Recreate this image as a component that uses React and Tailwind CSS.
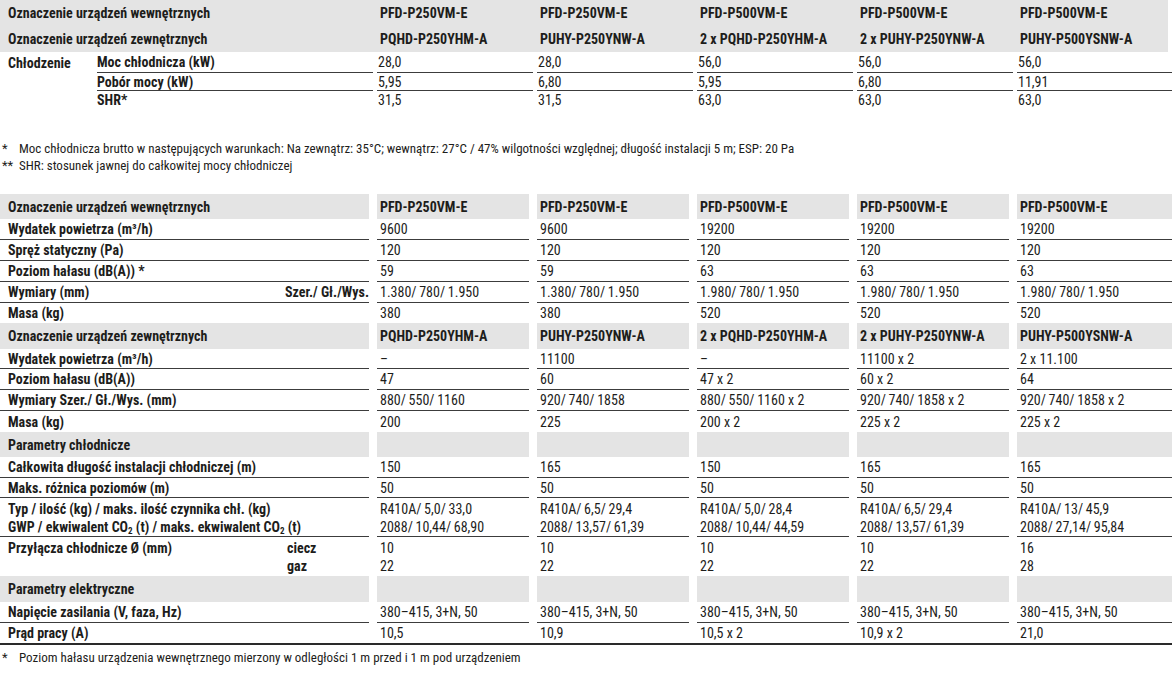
import { Fragment } from 'react';
import clsx from 'clsx';

const GRID = 'grid grid-cols-[369px_152px_152px_152px_152px_155px] gap-x-[8px]';
const LINE = 'border-b border-[#3c3c3c]';

const fix = (v) => (typeof v === 'string' ? v.replace(/\//g, '/\u2009') : v);

const topIndoor = ['PFD-P250VM-E', 'PFD-P250VM-E', 'PFD-P500VM-E', 'PFD-P500VM-E', 'PFD-P500VM-E'];
const topOutdoor = ['PQHD-P250YHM-A', 'PUHY-P250YNW-A', '2 x PQHD-P250YHM-A', '2 x PUHY-P250YNW-A', 'PUHY-P500YSNW-A'];
const topRows = [
  ['Moc chłodnicza (kW)', ['28,0', '28,0', '56,0', '56,0', '56,0']],
  ['Pobór mocy (kW)', ['5,95', '6,80', '5,95', '6,80', '11,91']],
  ['SHR*', ['31,5', '31,5', '63,0', '63,0', '63,0']],
];

const empty = ['', '', '', '', ''];
const co2 = (
  <>
    CO<sub className="text-[9px]">2</sub>
  </>
);

function TopHead({ label, values }) {
  return (
    <div className="grid grid-cols-[377px_160px_160px_160px_160px_1fr] h-[26px] items-center font-bold">
      <div className="pl-2">{label}</div>
      {values.map((v, i) => (
        <div key={i} className="pl-[3px]">{v}</div>
      ))}
    </div>
  );
}

function Row({ label, values, h, line = true, gray = false, multi = false }) {
  const cell = clsx(
    'flex',
    multi ? 'flex-col pt-[2px] leading-[18px]' : 'items-center',
    h,
    line && LINE,
    gray && 'bg-[#e4e4e4] font-bold'
  );
  return (
    <div className={GRID}>
      <div className={clsx(cell, 'pl-2 font-bold')}>{label}</div>
      {values.map((v, i) => (
        <div key={i} className={clsx(cell, 'pl-[3px]')}>
          {multi ? v.map((x, j) => <div key={j}>{fix(x)}</div>) : fix(v)}
        </div>
      ))}
    </div>
  );
}

function Note({ mark, children }) {
  return (
    <div className="flex leading-[17px]">
      <span className="w-[19px] pl-[2px]">{mark}</span>
      <span>{children}</span>
    </div>
  );
}

export default function App() {
  return (
    <div className="w-[1172px] bg-white text-[14px] leading-[18px] text-[#1d1d1b] font-['Roboto_Condensed','Roboto',sans-serif] font-stretch-condensed">
      {/* Chłodzenie */}
      <div className="w-[1168px] bg-[#e4e4e4]">
        <TopHead label="Oznaczenie urządzeń wewnętrznych" values={topIndoor} />
        <TopHead label="Oznaczenie urządzeń zewnętrznych" values={topOutdoor} />
      </div>
      <div className="flex">
        <div className="w-[97px] h-[21px] pl-2 flex items-center font-bold">Chłodzenie</div>
        <div className="grid grid-cols-[276px_156px_156px_156px_156px_155px] gap-x-[4px]">
          {topRows.map(([label, vals], ri) => {
            const cell = clsx(
              'flex items-center',
              ri === 0 ? 'h-[21px]' : 'h-[18px]',
              ri < topRows.length - 1 && LINE
            );
            return (
              <Fragment key={label}>
                <div className={clsx(cell, 'font-bold')}>{label}</div>
                {vals.map((v, i) => (
                  <div key={i} className={clsx(cell, 'pl-[1px]')}>{v}</div>
                ))}
              </Fragment>
            );
          })}
        </div>
      </div>

      <div className="mt-[31px] text-[13px]">
        <Note mark="*">
          Moc chłodnicza brutto w następujących warunkach: Na zewnątrz: 35°C; wewnątrz: 27°C / 47% wilgotności względnej; długość instalacji 5 m; ESP: 20 Pa
        </Note>
        <Note mark="**">SHR: stosunek jawnej do całkowitej mocy chłodniczej</Note>
      </div>

      {/* Dane techniczne */}
      <div className="mt-[20px]">
        <Row gray line={false} h="h-[25px]" label="Oznaczenie urządzeń wewnętrznych" values={topIndoor} />
        <Row h="h-[21px]" label="Wydatek powietrza (m³/h)" values={['9600', '9600', '19200', '19200', '19200']} />
        <Row h="h-[21px]" label="Spręż statyczny (Pa)" values={['120', '120', '120', '120', '120']} />
        <Row h="h-[21px]" label="Poziom hałasu (dB(A)) *" values={['59', '59', '63', '63', '63']} />
        <Row
          h="h-[21px]"
          label={
            <span className="flex w-full justify-between">
              <span>Wymiary (mm)</span>
              <span>Szer./ Gł./Wys.</span>
            </span>
          }
          values={['1.380/780/1.950', '1.380/780/1.950', '1.980/780/1.950', '1.980/780/1.950', '1.980/780/1.950']}
        />
        <Row line={false} h="h-[20px]" label="Masa (kg)" values={['380', '380', '520', '520', '520']} />

        <Row gray line={false} h="h-[26px]" label="Oznaczenie urządzeń zewnętrznych" values={topOutdoor} />
        <Row h="h-[20px]" label="Wydatek powietrza (m³/h)" values={['–', '11100', '–', '11100 x 2', '2 x 11.100']} />
        <Row h="h-[21px]" label="Poziom hałasu (dB(A))" values={['47', '60', '47 x 2', '60 x 2', '64']} />
        <Row
          h="h-[21px]"
          label="Wymiary Szer./ Gł./Wys. (mm)"
          values={['880/550/1160', '920/740/1858', '880/550/1160 x 2', '920/740/1858 x 2', '920/740/1858 x 2']}
        />
        <Row line={false} h="h-[21px]" label="Masa (kg)" values={['200', '225', '200 x 2', '225 x 2', '225 x 2']} />

        <Row gray line={false} h="h-[25px]" label="Parametry chłodnicze" values={empty} />
        <Row h="h-[21px]" label="Całkowita długość instalacji chłodniczej (m)" values={['150', '165', '150', '165', '165']} />
        <Row h="h-[20px]" label="Maks. różnica poziomów (m)" values={['50', '50', '50', '50', '50']} />
        <Row
          multi
          h="h-[39px]"
          label={
            <>
              <div>Typ / ilość (kg) / maks. ilość czynnika chł. (kg)</div>
              <div>GWP / ekwiwalent {co2} (t) / maks. ekwiwalent {co2} (t)</div>
            </>
          }
          values={[
            ['R410A/5,0/33,0', '2088/10,44/68,90'],
            ['R410A/6,5/29,4', '2088/13,57/61,39'],
            ['R410A/5,0/28,4', '2088/10,44/44,59'],
            ['R410A/6,5/29,4', '2088/13,57/61,39'],
            ['R410A/13/45,9', '2088/27,14/95,84'],
          ]}
        />
        <Row
          multi
          line={false}
          h="h-[39px]"
          label={
            <div className="grid grid-cols-[279px_1fr]">
              <div>Przyłącza chłodnicze Ø (mm)</div>
              <div>ciecz</div>
              <div />
              <div>gaz</div>
            </div>
          }
          values={[
            ['10', '22'],
            ['10', '22'],
            ['10', '22'],
            ['10', '22'],
            ['16', '28'],
          ]}
        />

        <Row gray line={false} h="h-[26px]" label="Parametry elektryczne" values={empty} />
        <Row
          h="h-[21px]"
          label="Napięcie zasilania (V, faza, Hz)"
          values={['380–415, 3+N, 50', '380–415, 3+N, 50', '380–415, 3+N, 50', '380–415, 3+N, 50', '380–415, 3+N, 50']}
        />
        <div className="border-b-2 border-[#2a2a2a]">
          <Row line={false} h="h-[20px]" label="Prąd pracy (A)" values={['10,5', '10,9', '10,5 x 2', '10,9 x 2', '21,0']} />
        </div>
      </div>

      <div className="mt-[4px] text-[13px]">
        <Note mark="*">Poziom hałasu urządzenia wewnętrznego mierzony w odległości 1 m przed i 1 m pod urządzeniem</Note>
      </div>
    </div>
  );
}
